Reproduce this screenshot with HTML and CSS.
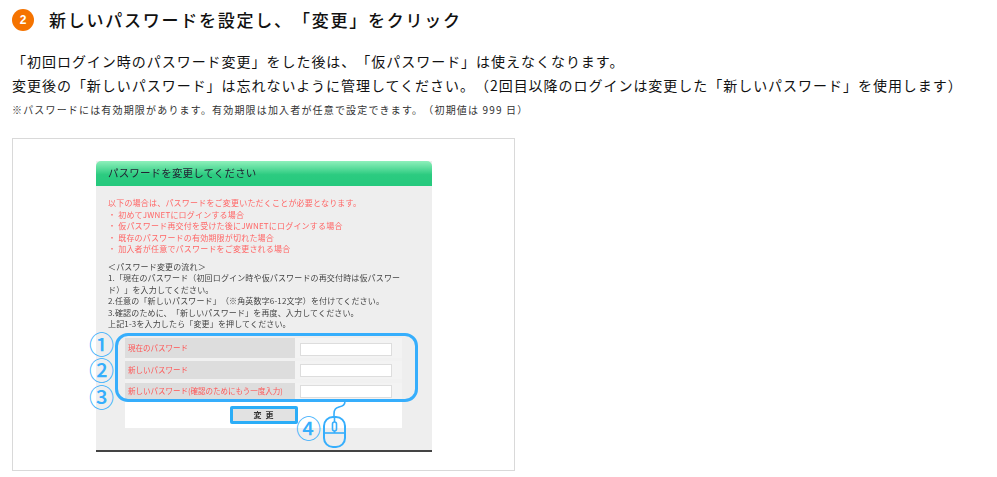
FILE: index.html
```html
<!DOCTYPE html>
<html lang="ja">
<head>
<meta charset="utf-8">
<title>新しいパスワードを設定</title>
<link rel="stylesheet" href="styles.css">
</head>
<body>
<section class="step">
  <h2 class="step-head"><span class="step-num">2</span><span class="step-title">新しいパスワードを設定し、「変更」をクリック</span></h2>
  <p class="lead">「初回ログイン時のパスワード変更」をした後は、「仮パスワード」は使えなくなります。<br>変更後の「新しいパスワード」は忘れないように管理してください。（2回目以降のログインは変更した「新しいパスワード」を使用します）</p>
  <p class="note">※パスワードには有効期限があります。有効期限は加入者が任意で設定できます。（初期値は 999 日）</p>
  <figure class="shot">
    <div class="dialog">
      <div class="dialog-title">パスワードを変更してください</div>
      <div class="dialog-body">
        <p class="warn">以下の場合は、パスワードをご変更いただくことが必要となります。<br>・ 初めてJWNETにログインする場合<br>・ 仮パスワード再交付を受けた後にJWNETにログインする場合<br>・ 既存のパスワードの有効期限が切れた場合<br>・ 加入者が任意でパスワードをご変更される場合</p>
        <p class="flow">＜パスワード変更の流れ＞<br>1.「現在のパスワード（初回ログイン時や仮パスワードの再交付時は仮パスワード）」を入力してください。<br>2.任意の「新しいパスワード」（※角英数字6-12文字）を付けてください。<br>3.確認のために、「新しいパスワード」を再度、入力してください。<br>上記1-3を入力したら「変更」を押してください。</p>
        <div class="form">
          <div class="row"><div class="label">現在のパスワード</div><div class="field"><span class="input"></span></div></div>
          <div class="row"><div class="label">新しいパスワード</div><div class="field"><span class="input"></span></div></div>
          <div class="row"><div class="label">新しいパスワード(確認のためにもう一度入力)</div><div class="field"><span class="input"></span></div></div>
          <div class="actions"><span class="btn">変 更</span></div>
        </div>
      </div>
    </div>
    <div class="callout"></div>
    <span class="mark m1">①</span>
    <span class="mark m2">②</span>
    <span class="mark m3">③</span>
    <span class="mark m4">④</span>
    <svg class="mouse" width="30" height="50" viewBox="0 0 30 50" fill="none" stroke="#36aefc" stroke-width="1.6">
      <path d="M24 0c0 4-2 5-6 6-3 1-5 2-5 7v3"/>
      <rect x="3" y="16" width="21" height="30" rx="9" stroke-width="2"/>
      <path d="M3 32h21"/>
      <rect x="11.500" y="21" width="4" height="9" rx="2"/>
      <path d="M13.500 16v5M13.500 30v2"/>
    </svg>
  </figure>
</section>
</body>
</html>
```
FILE: styles.css
```css
* { box-sizing: border-box; }
html, body { margin: 0; padding: 0; background: #fff; }
body {
  font-family: "Noto Sans CJK JP", "Noto Sans", sans-serif;
  color: #111;
  text-spacing-trim: space-all;
}
.step { padding: 9px 0 0 12px; }
.step-head {
  display: flex;
  align-items: center;
  gap: 15px;
  margin: 0;
  height: 22px;
  font-size: 17px;
  font-weight: 500;
}
.step-num {
  width: 22px;
  height: 22px;
  flex: none;
  border-radius: 50%;
  background: #f57300;
  color: #fff;
  font: bold 12px/22px "Liberation Sans", sans-serif;
  text-align: center;
}
.step-title { letter-spacing: 1.760px; line-height: 22px; }
.lead {
  margin: 18px 0 0;
  font-size: 14px;
  line-height: 24px;
  letter-spacing: 0.970px;
}
.note {
  margin: 6px 0 0;
  font-size: 10px;
  line-height: 14px;
  letter-spacing: 1.170px;
  color: #333;
}
.shot {
  position: relative;
  margin: 21px 0 0;
  width: 503px;
  height: 333px;
  border: 1px solid #d9d9d9;
  padding: 22px 0 0 83px;
}
.dialog {
  width: 336px;
  height: 291px;
  background: #eee;
  border-bottom: 2px solid #444;
  filter: blur(0.35px);
  display: flex;
  flex-direction: column;
}
.dialog-title {
  height: 25px;
  border-radius: 5px 5px 0 0;
  background: linear-gradient(#8ef0bb, #2ccb80 55%, #25c97d);
  padding-left: 12px;
  font-size: 10.500px;
  letter-spacing: 0.150px;
  line-height: 24px;
  color: #223;
}
.dialog-body { padding: 11px 0 0 12px; font-size: 8px; line-height: 11.500px; }
.warn { margin: 0; color: #f66; letter-spacing: 0.200px; }
.flow { margin: 6px 0 0; width: 300px; color: #444; letter-spacing: 0.150px; }
.form {
  margin: 8px 0 0 17px;
  width: 277px;
  height: 90px;
  background: linear-gradient(#f1f1f1 62px, #fff 62px);
  display: grid;
  grid-template-rows: 20px 18px 17px auto;
  row-gap: 3.500px;
}
.row { display: flex; }
.label {
  width: 170px;
  background: #ddd;
  color: #f55;
  font-size: 7.500px;
  display: flex;
  align-items: center;
  padding-left: 3px;
}
.field { flex: 1; background: #f3f3f3; display: flex; align-items: flex-end; padding: 0 0 2px 5px; }
.input {
  display: block;
  width: 92px;
  height: 13px;
  background: #fff;
  border: 1px solid #ddd;
}
.actions { display: flex; justify-content: center; padding-top: 3px; }
.btn {
  width: 68px;
  height: 18px;
  border: 3px solid #2badf7;
  border-radius: 2px;
  background: #e2e2e2;
  color: #333;
  text-align: center;
  font-size: 8px;
  font-weight: 700;
  word-spacing: 2px;
  line-height: 11px;
}
.callout {
  position: absolute;
  left: 102px;
  top: 194px;
  width: 303px;
  height: 69px;
  border: 3px solid #36aefc;
  border-radius: 13px;
}
.mark {
  position: absolute;
  color: #36aefc;
  font: 500 25px/24px "Noto Sans CJK JP", sans-serif;
}
.m1 { left: 76px; top: 192px; }
.m2 { left: 76px; top: 218px; }
.m3 { left: 76px; top: 245px; }
.m4 { left: 283px; top: 276px; }
.mouse { position: absolute; left: 308px; top: 262px; }
```
